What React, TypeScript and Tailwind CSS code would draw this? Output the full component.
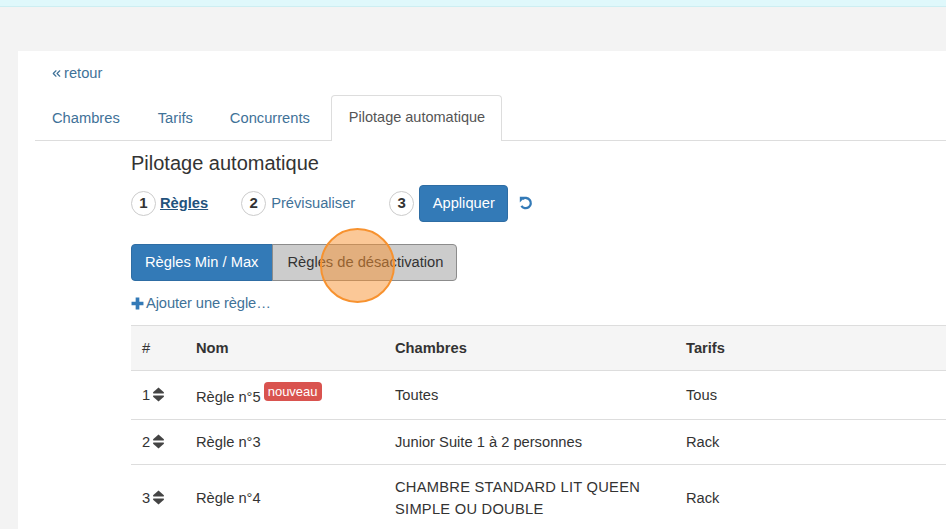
import { ChevronsLeft } from "lucide-react";

const font = { fontFamily: '"Liberation Sans", Arial, sans-serif' };

function StepBadge({ n }: { n: number }) {
  return (
    <span className="flex h-[25px] w-[25px] shrink-0 items-center justify-center rounded-full border border-[#ccc] bg-white text-[15px] font-bold text-[#333]">
      {n}
    </span>
  );
}

function SortIcon() {
  return (
    <svg viewBox="0 0 14 16" className="-mt-[1px] ml-[2px] h-[17px] w-[13px] fill-[#444]">
      <path d="M7 0.5 L12.8 5.6 Q13.4 7 12 7 L2 7 Q0.6 7 1.2 5.6 Z" />
      <path d="M7 15.5 L12.8 10.4 Q13.4 9 12 9 L2 9 Q0.6 9 1.2 10.4 Z" />
    </svg>
  );
}

function UndoIcon() {
  return (
    <svg viewBox="0 0 14 14" className="mb-[2px] ml-[11px] h-[14px] w-[14px] fill-none stroke-[#337ab7]">
      <path d="M3.4 3.2 A5.1 5.1 0 1 1 2.4 9.8" strokeWidth="2.3" />
      <path d="M0.8 0.8 L6.4 0.8 L0.8 6.6 Z" className="fill-[#337ab7] stroke-none" />
    </svg>
  );
}

export default function App() {
  return (
    <div style={font} className="relative h-[529px] w-[946px] overflow-hidden bg-[#f3f3f3] text-[14.7px] text-[#333]">
      {/* Top band */}
      <div className="h-[7px] border-b border-[#cdeef2] bg-[#dff8fb]" />

      {/* Panel */}
      <div className="ml-[18px] mt-[44px] h-[478px] bg-white pl-[17px]">
        <div className="pl-[15px] pt-[13px] leading-[18px] text-[#3f7298]">
          <a className="flex items-center">
            <ChevronsLeft className="h-[13px] w-[13px]" strokeWidth={2.2} />
            <span className="ml-[1px]">retour</span>
          </a>
        </div>

        {/* Tabs */}
        <div className="mt-[13px] flex h-[46px] border-b border-[#ddd] text-[#3f7298]">
          <a className="pl-[17px] pr-[18px] pt-[12px]">Chambres</a>
          <a className="pl-[20px] pr-[19px] pt-[12px]">Tarifs</a>
          <a className="pl-[18px] pr-[21px] pt-[12px]">Concurrents</a>
          <a className="h-[46px] rounded-t-[4px] border border-b-0 border-[#ddd] bg-white pl-[17px] pr-[16px] pt-[11px] text-[14.5px] text-[#555]">
            Pilotage automatique
          </a>
        </div>

        <div className="pl-[96px]">
          <h2 className="mt-[11px] text-[20px] leading-[23px]">Pilotage automatique</h2>

          {/* Steps */}
          <div className="mt-[10px] flex h-[37px] items-center">
            <StepBadge n={1} />
            <a className="ml-[4px] font-bold text-[#23527c] underline">Règles</a>
            <span className="ml-[33px]">
              <StepBadge n={2} />
            </span>
            <a className="ml-[5px] text-[#3f7298]">Prévisualiser</a>
            <span className="ml-[34px]">
              <StepBadge n={3} />
            </span>
            <button className="ml-[5px] h-[37px] w-[89px] rounded-[4px] border border-[#2e6da4] bg-[#337ab7] text-white">
              Appliquer
            </button>
            <UndoIcon />
          </div>

          {/* Rule type toggle */}
          <div className="mt-[22px] flex h-[37px] w-fit">
            <button className="rounded-l-[4px] border border-[#2e6da4] bg-[#337ab7] pl-[13px] pr-[14px] text-white">
              Règles Min / Max
            </button>
            <button className="-ml-px rounded-r-[4px] border border-[#8c8c8c] bg-[#ccc] pl-[14px] pr-[13px]">
              Règles de désactivation
            </button>
          </div>

          <a className="mt-[13px] flex items-center leading-[18px] tracking-[-0.1px] text-[#3f7298]">
            <svg viewBox="0 0 12 12" className="h-[13px] w-[13px] fill-[#337ab7]">
              <path d="M4.3 0.5 H7.7 V4.3 H11.5 V7.7 H7.7 V11.5 H4.3 V7.7 H0.5 V4.3 H4.3 Z" />
            </svg>
            <span className="ml-[2px]">Ajouter une règle…</span>
          </a>

          {/* Rules table */}
          <table className="mt-[13px] w-[815px] table-fixed border-collapse">
            <thead>
              <tr className="h-[45px] border-y border-[#ddd] bg-[#f5f5f5] text-left">
                <th className="w-[65px] pl-[11px] font-normal">#</th>
                <th className="w-[199px] font-bold">Nom</th>
                <th className="w-[291px] font-bold">Chambres</th>
                <th className="font-bold">Tarifs</th>
              </tr>
            </thead>
            <tbody>
              <tr className="h-[49px] border-b border-[#ddd]">
                <td className="pl-[11px]">
                  <span className="flex items-center">1<SortIcon /></span>
                </td>
                <td>
                  <span className="relative top-[2px]">Règle n°5</span>
                  <span className="relative -top-[4px] ml-[3px] rounded-[4px] bg-[#d9534f] px-[4px] py-[2px] text-[13px] text-white">
                    nouveau
                  </span>
                </td>
                <td>Toutes</td>
                <td>Tous</td>
              </tr>
              <tr className="h-[45px] border-b border-[#ddd]">
                <td className="pl-[11px]">
                  <span className="flex items-center">2<SortIcon /></span>
                </td>
                <td>Règle n°3</td>
                <td>Junior Suite 1 à 2 personnes</td>
                <td>Rack</td>
              </tr>
              <tr className="h-[66px]">
                <td className="pl-[11px]">
                  <span className="flex items-center">3<SortIcon /></span>
                </td>
                <td>Règle n°4</td>
                <td className="leading-[22px] tracking-[0.25px]">
                  CHAMBRE STANDARD LIT QUEEN
                  <br />
                  SIMPLE OU DOUBLE
                </td>
                <td>Rack</td>
              </tr>
            </tbody>
          </table>
        </div>
      </div>

      {/* Click marker over the toggle */}
      <div className="absolute left-[320px] top-[228px] h-[75px] w-[75px] rounded-full border-[2.5px] border-[#f7922f] bg-[#f7922f]/50" />
    </div>
  );
}
